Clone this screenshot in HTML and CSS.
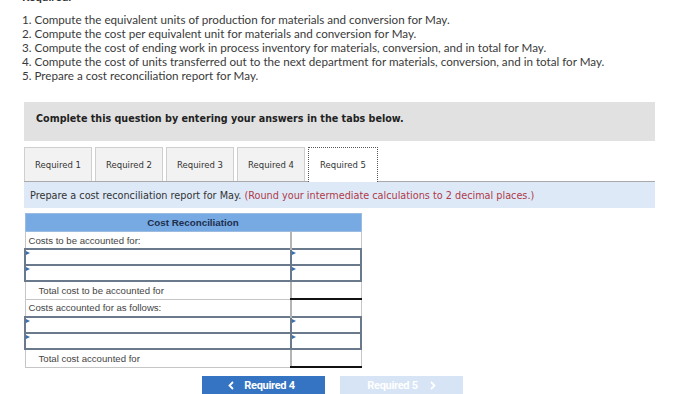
FILE: index.html
```html
<!DOCTYPE html>
<html lang="en">
<head>
    <meta charset="UTF-8">
    <meta name="viewport" content="width=device-width, initial-scale=1.0">
    <title>Cost Reconciliation</title>
    <link rel="stylesheet" href="styles.css">
</head>
<body>
    <div class="page">
        <h4 class="req-title">Required:</h4>
        <div class="tasks">
            <p>1. Compute the equivalent units of production for materials and conversion for May.</p>
            <p>2. Compute the cost per equivalent unit for materials and conversion for May.</p>
            <p>3. Compute the cost of ending work in process inventory for materials, conversion, and in total for May.</p>
            <p>4. Compute the cost of units transferred out to the next department for materials, conversion, and in total for May.</p>
            <p>5. Prepare a cost reconciliation report for May.</p>
        </div>

        <div class="notice">Complete this question by entering your answers in the tabs below.</div>

        <div class="tabs">
            <button class="tab">Required 1</button>
            <button class="tab">Required 2</button>
            <button class="tab">Required 3</button>
            <button class="tab">Required 4</button>
            <button class="tab active">Required 5</button>
        </div>

        <div class="prompt">
            Prepare a cost reconciliation report for May. <span class="hint">(Round your intermediate calculations to 2 decimal places.)</span>
        </div>

        <table class="recon">
            <tr>
                <th colspan="2">Cost Reconciliation</th>
            </tr>
            <tr>
                <td class="label">Costs to be accounted for:</td>
                <td class="amount"></td>
            </tr>
            <tr class="entry">
                <td class="field"></td>
                <td class="field"></td>
            </tr>
            <tr class="entry">
                <td class="field"></td>
                <td class="field"></td>
            </tr>
            <tr>
                <td class="label indent">Total cost to be accounted for</td>
                <td class="amount total"></td>
            </tr>
            <tr>
                <td class="label">Costs accounted for as follows:</td>
                <td class="amount"></td>
            </tr>
            <tr class="entry">
                <td class="field"></td>
                <td class="field"></td>
            </tr>
            <tr class="entry">
                <td class="field"></td>
                <td class="field"></td>
            </tr>
            <tr>
                <td class="label indent">Total cost accounted for</td>
                <td class="amount total"></td>
            </tr>
        </table>

        <div class="nav">
            <button class="nav-btn prev">
                <svg class="chev" width="6" height="9" viewBox="0 0 6 9"><polyline points="5,1 1.5,4.5 5,8" fill="none" stroke="#fff" stroke-width="1.8"/></svg>
                Required 4
            </button>
            <button class="nav-btn next" disabled>
                Required 5
                <svg class="chev" width="6" height="9" viewBox="0 0 6 9"><polyline points="1,1 4.5,4.5 1,8" fill="none" stroke="#fff" stroke-width="1.8"/></svg>
            </button>
        </div>
    </div>
</body>
</html>
```

FILE: styles.css
```css
body {
    margin: 0;
    background: #fff;
    overflow: hidden;
}

.page {
    width: 631px;
    padding-left: 24px;
}

.req-title {
    margin: -10px 0 0 -2px;
    height: 14px;
    line-height: 14px;
    font-family: Lato, sans-serif;
    font-size: 11.6px;
    font-weight: bold;
    color: #333;
}

.tasks {
    margin: 0 0 0 -2px;
    padding-top: 9px;
    font-family: Lato, sans-serif;
    font-size: 11.65px;
    color: #3a3a3a;
}

.tasks p {
    margin: 0;
    line-height: 14px;
}

.notice {
    margin-top: 19px;
    height: 39px;
    box-sizing: border-box;
    padding: 10px 12px 0;
    background: #e1e1e1;
    font-family: "DejaVu Sans", Verdana, sans-serif;
    font-size: 9.6px;
    font-weight: bold;
    color: #222;
    line-height: 14px;
}

.tabs {
    display: flex;
    gap: 3px;
    margin-top: 6px;
    border-bottom: 1px solid #a9a9a9;
}

.tab {
    width: 68px;
    height: 34px;
    padding: 0;
    background: #f2f2f2;
    border: 1px solid #cfcfcf;
    border-bottom: none;
    font-family: "DejaVu Sans", Verdana, sans-serif;
    font-size: 8.5px;
    color: #333;
}

.tab.active {
    background: #fff;
    border: 1px dotted #555;
    border-bottom: none;
    margin-bottom: -1px;
    height: 35px;
    width: 70px;
}

.prompt {
    height: 26px;
    box-sizing: border-box;
    padding: 8px 6px 0;
    background: #dde9f7;
    font-family: "DejaVu Sans", Verdana, sans-serif;
    font-size: 9.7px;
    color: #333;
}

.hint {
    color: #b03a48;
}

.recon {
    margin-top: 5px;
    width: 338px;
    border-collapse: collapse;
    font-family: "Liberation Sans", Arial, sans-serif;
    font-size: 9.6px;
    color: #444;
}

.recon th {
    height: 17px;
    padding: 0;
    background: #77a9e2;
    border: 1px solid #9bbbe0;
    color: #1d2f4e;
    font-weight: bold;
    font-size: 9.8px;
}

.recon td {
    height: 16px;
    padding: 0 3px;
    border: 1px solid #c6c6c6;
}

.recon td.amount {
    width: 63px;
    border-left: 2px solid #b4b4b4;
}

.recon td.indent {
    padding-left: 13px;
}

.recon td.total {
    border-bottom: 2px solid #111;
}

.recon tr.entry td {
    position: relative;
    border: 2px solid #6a7a8c;
    height: 14px;
}

.recon tr.entry td + td {
    border-left: 2px solid #b4b4b4;
}

.recon tr.entry td::before {
    content: "";
    position: absolute;
    top: 1px;
    left: 0;
    border-top: 2px solid transparent;
    border-bottom: 2px solid transparent;
    border-left: 4px solid #3b6fb0;
}

.nav {
    display: flex;
    justify-content: center;
    gap: 15px;
    margin-top: 8px;
    padding-right: 14px;
}

.nav-btn {
    display: flex;
    align-items: center;
    justify-content: center;
    gap: 10px;
    width: 123px;
    height: 22px;
    padding: 0 0 3px;
    border: none;
    font-family: Roboto, "Liberation Sans", sans-serif;
    font-size: 11px;
    font-weight: bold;
    letter-spacing: -0.3px;
    color: #fff;
}

.prev {
    background: #3474c2;
    padding-right: 4px;
}

.next {
    background: #d6e4f5;
    gap: 12px;
}
```
